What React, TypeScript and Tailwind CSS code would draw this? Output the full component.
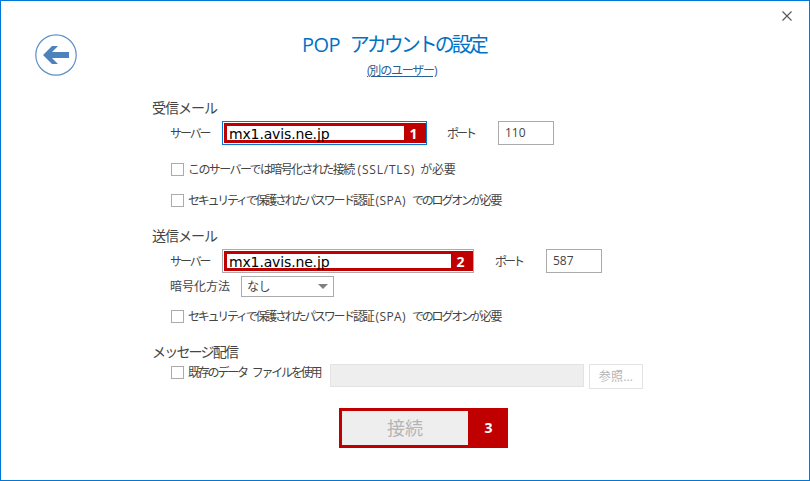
import React from 'react';

const font = "font-['Open_Sans','Noto_Sans_CJK_JP',sans-serif]";

const Heading = ({ children, className = '' }: { children: React.ReactNode; className?: string }) => (
  <div className={`h-5 text-[14px] leading-5 text-[#444] ${className}`}>{children}</div>
);

const Label = ({ children, className = '' }: { children: React.ReactNode; className?: string }) => (
  <span className={`pt-px text-[12px] leading-4 text-[#444] whitespace-nowrap ${className}`}>{children}</span>
);

const CheckRow = ({ children, className = '' }: { children: React.ReactNode; className?: string }) => (
  <div className={`flex items-center ml-[19px] h-[13px] ${className}`}>
    <span className="w-[13px] h-[13px] border border-[#ababab] bg-white shrink-0" />
    <span className="ml-[4px] pt-px text-[12px] leading-4 text-[#444] whitespace-nowrap">{children}</span>
  </div>
);

const ServerField = ({ num, border, width }: { num: string; border: string; width: string }) => (
  <div className={`${width} h-[24px] border ${border} pl-px py-px`}>
    <div className="flex h-full border-[3px] border-[#c00000] bg-white">
      <span className="flex-1 pl-[2px] text-[14px] leading-[16px] text-black tracking-[-0.15px] font-['DejaVu_Sans',sans-serif]">mx1.avis.ne.jp</span>
      <span className="w-[19px] bg-[#c00000] text-white text-center text-[14px] leading-[16px] font-bold">{num}</span>
    </div>
  </div>
);

const PortField = ({ value }: { value: string }) => (
  <div className="w-[56px] h-[24px] border border-[#ababab] pl-[6px] text-[12px] leading-[22px] text-[#444]">{value}</div>
);

const SpaLabel = () => (
  <>
    <span className="tracking-[-2.25px]">セキュリティで保護されたパスワード認証</span>
    <span className="ml-[3px] mr-[6px] tracking-[0.4px]">(SPA)</span>
    <span className="tracking-[-2.2px]">でのログオンが必要</span>
  </>
);

export default function App() {
  return (
    <div className={`relative w-[810px] h-[481px] box-border border border-[#0078d7] bg-white overflow-hidden ${font}`}>
      <button className="absolute top-[10px] right-[17px] w-[10px] h-[10px]" aria-label="閉じる">
        <svg viewBox="0 0 10 10" className="w-[10px] h-[10px]">
          <path d="M0.5 0.5l9 9M9.5 0.5l-9 9" stroke="#555" strokeWidth="1.1" fill="none" />
        </svg>
      </button>

      {/* header */}
      <div className="flex h-[97px] pl-[34px] pt-[33px]">
        <svg width="42" height="42" viewBox="0 0 42 42" className="shrink-0">
          <circle cx="21" cy="21" r="20.2" fill="white" stroke="#5b8fc7" strokeWidth="1.2" />
          <path d="M8 21L17 12H23L17 18H34V24H17L23 30H17Z" fill="#4d82bc" />
        </svg>
        <div className="ml-[225px] -mt-[3px]">
          <div className="text-[20px] leading-[27px] text-[#0072c6] whitespace-nowrap">
            <span className="tracking-[-0.6px]">POP</span>
            <span className="ml-[10px] tracking-[-3px]">アカウントの設定</span>
          </div>
          <div className="mt-[5px] ml-[65px] text-[12px] leading-4 text-[#2a5f97] underline whitespace-nowrap tracking-[-1.2px]">(別のユーザー)</div>
        </div>
      </div>

      {/* form */}
      <div className="pl-[151px]">
        <Heading className="tracking-[-1px]">受信メール</Heading>
        <div className="flex items-center mt-[3px] ml-[18px]">
          <Label className="w-[52px] tracking-[-2.1px]">サーバー</Label>
          <ServerField num="1" border="border-[#0078d7]" width="w-[205px]" />
          <Label className="ml-[20px] w-[51px] tracking-[-3px]">ポート</Label>
          <PortField value="110" />
        </div>
        <CheckRow className="mt-[18px]">
          <span className="tracking-[-1.6px]">このサーバーでは暗号化された接続</span>
          <span className="ml-[4px] mr-[5px] tracking-[0.8px]">(SSL/TLS)</span>
          <span className="tracking-[-0.2px]">が必要</span>
        </CheckRow>
        <CheckRow className="mt-[18px]"><SpaLabel /></CheckRow>

        <Heading className="mt-[19px] tracking-[-1px]">送信メール</Heading>
        <div className="flex items-center mt-[3px] ml-[18px]">
          <Label className="w-[52px] tracking-[-2.1px]">サーバー</Label>
          <ServerField num="2" border="border-[#ababab]" width="w-[252px]" />
          <Label className="ml-[21px] w-[51px] tracking-[-3px]">ポート</Label>
          <PortField value="587" />
        </div>
        <div className="flex items-center mt-[3px] ml-[18px]">
          <Label className="w-[71px]">暗号化方法</Label>
          <div className="flex items-center justify-between w-[93px] h-[21px] border border-[#ababab] pl-[5px] pr-[3px]">
            <span className="pt-px text-[12px] leading-4 text-[#444] tracking-[-0.5px]">なし</span>
            <svg width="10" height="5" viewBox="0 0 10 5" className="mr-[2px]">
              <path d="M0 0H10L5 5Z" fill="#808080" />
            </svg>
          </div>
        </div>
        <CheckRow className="mt-[13px]"><SpaLabel /></CheckRow>

        <Heading className="mt-[19px] tracking-[-1.8px]">メッセージ配信</Heading>
        <div className="flex items-start mt-[2px]">
          <div className="w-[178px]">
            <CheckRow className="mt-[2px]">
              <span className="tracking-[-2.2px] [word-spacing:4px]">既存のデータ ファイルを使用</span>
            </CheckRow>
          </div>
          <div className="w-[254px] h-[23px] bg-[#eeeeee] border border-[#e3e3e3]" />
          <div className="ml-[5px] w-[54px] h-[25px] border border-[#e3e3e3] text-center text-[12px] leading-[23px] text-[#b5b5b5] tracking-[0.2px]">参照...</div>
        </div>
      </div>

      <div className="flex ml-[338px] mt-[19px] w-[169px] h-[40px] border-[3px] border-[#c00000] bg-[#c00000]">
        <div className="w-[126px] bg-[#eeeeee] text-center text-[18px] leading-[34px] text-[#b5b5b5]">接続</div>
        <div className="flex-1 pl-[4px] text-center text-white text-[14px] leading-[34px] font-bold">3</div>
      </div>
    </div>
  );
}
